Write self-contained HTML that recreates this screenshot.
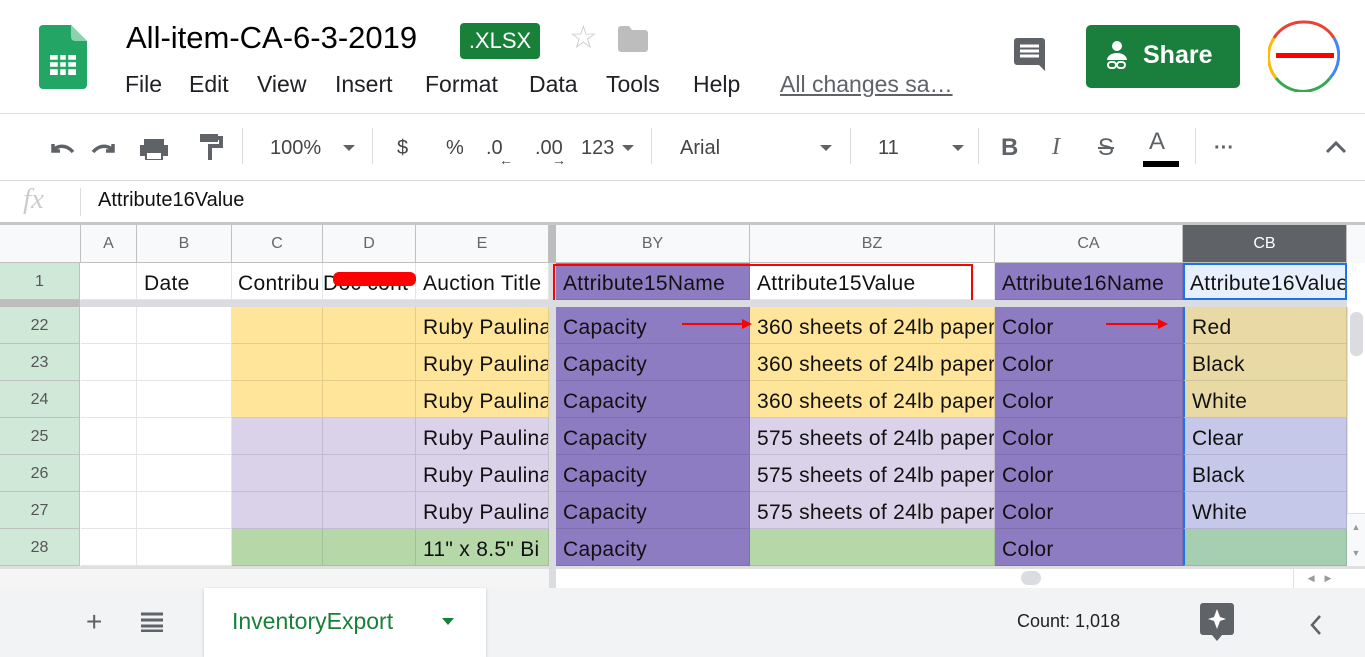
<!DOCTYPE html>
<html><head><meta charset="utf-8"><style>
*{margin:0;padding:0;box-sizing:border-box}
body{width:1365px;height:657px;overflow:hidden;background:#fff;font-family:"Liberation Sans",Arial,sans-serif;position:relative}
.a{position:absolute}
.c{position:absolute;height:37px;border-right:1px solid rgba(0,0,0,.1);border-bottom:1px solid rgba(0,0,0,.1);font-size:21px;letter-spacing:0.3px;line-height:41px;padding-left:7px;white-space:nowrap;overflow:hidden;color:#111}
.h{position:absolute;top:225px;height:38px;background:#f8f9fa;border-right:1px solid #c0c0c0;border-bottom:1px solid #c0c0c0;font-size:16px;color:#666;text-align:center;line-height:38px}
.rh{position:absolute;left:0;width:80px;height:37px;background:#d0e8d8;border-bottom:1px solid #c0c0c0;border-right:1px solid #c0c0c0;text-align:center;font-size:16px;color:#555;line-height:37px}
.m{position:absolute;top:71px;font-size:23px;color:#202124}
.t{position:absolute;top:137px;font-size:20px;color:#444}
.sep{position:absolute;top:128px;width:1px;height:36px;background:#dadce0}
.dd{position:absolute;top:145px;width:0;height:0;border-left:6px solid transparent;border-right:6px solid transparent;border-top:6px solid #5f6368}
</style></head><body>
<svg class="a" style="left:39px;top:25px" width="48" height="64" viewBox="0 0 48 64"><path d="M4 0h28l16 16v44a4 4 0 0 1-4 4H4a4 4 0 0 1-4-4V4a4 4 0 0 1 4-4z" fill="#23a566"/><path d="M32 0l16 16H36a4 4 0 0 1-4-4z" fill="#8ed1b1"/><rect x="11" y="30" width="26" height="20" fill="#fff"/><path d="M11 36h26M11 43h26M20 30v20M28 30v20" stroke="#23a566" stroke-width="2.5"/></svg>
<div class="a" style="left:126px;top:20px;font-size:31px;color:#000">All-item-CA-6-3-2019</div>
<div class="a" style="left:460px;top:23px;width:80px;height:36px;background:#188038;border-radius:4px;color:#fff;font-size:22px;text-align:center;line-height:36px">.XLSX</div>
<div class="a" style="left:569px;top:18px;font-size:32px;color:#ccc">☆</div>
<svg class="a" style="left:618px;top:26px" width="30" height="26"><path d="M0 3a3 3 0 0 1 3-3h8l3 4h13a3 3 0 0 1 3 3v16a3 3 0 0 1-3 3H3a3 3 0 0 1-3-3z" fill="#bdbdbd"/></svg>
<div class="m" style="left:125px">File</div><div class="m" style="left:189px">Edit</div><div class="m" style="left:257px">View</div><div class="m" style="left:335px">Insert</div><div class="m" style="left:425px">Format</div><div class="m" style="left:529px">Data</div><div class="m" style="left:606px">Tools</div><div class="m" style="left:693px">Help</div>
<div class="m" style="left:780px;color:#5f6368;text-decoration:underline">All changes sa…</div>
<svg class="a" style="left:1014px;top:38px" width="36" height="36"><path d="M3 0h25a3 3 0 0 1 3 3v30l-6-6H3a3 3 0 0 1-3-3V3a3 3 0 0 1 3-3z" fill="#5f6368"/><path d="M6 8h19M6 13h19M6 18h19" stroke="#fff" stroke-width="3"/></svg>
<div class="a" style="left:1086px;top:25px;width:154px;height:63px;background:#1a7f3c;border-radius:5px"></div>
<svg class="a" style="left:1104px;top:40px" width="26" height="32"><circle cx="13" cy="6" r="5" fill="#fff"/><path d="M3 20a10 7 0 0 1 20 0z" fill="#fff"/><rect x="4" y="22" width="8" height="6" rx="3" fill="none" stroke="#fff" stroke-width="2"/><rect x="13" y="22" width="8" height="6" rx="3" fill="none" stroke="#fff" stroke-width="2"/></svg>
<div class="a" style="left:1143px;top:41px;font-size:25px;color:#fff;font-weight:bold">Share</div>
<svg class="a" style="left:1268px;top:20px" width="72" height="72"><path d="M36 2a34 34 0 0 1 30 16" stroke="#ea4335" stroke-width="3" fill="none"/><path d="M66 18a34 34 0 0 1-4 40" stroke="#4285f4" stroke-width="3" fill="none"/><path d="M62 58a34 34 0 0 1-54 0" stroke="#34a853" stroke-width="3" fill="none"/><path d="M8 58A34 34 0 0 1 6 18" stroke="#fbbc05" stroke-width="3" fill="none"/><path d="M6 18A34 34 0 0 1 36 2" stroke="#ea4335" stroke-width="3" fill="none"/><rect x="8" y="33" width="58" height="5" fill="#f00"/></svg>
<div class="a" style="left:0;top:113px;width:1365px;height:1px;background:#dadce0"></div>
<svg class="a" style="left:47px;top:136px" width="140" height="26"><path d="M6 8v7h7M6 15c4-6 13-7 20 1" stroke="#5f6368" stroke-width="3.5" fill="none"/><path d="M81 8v7h-7M81 15c-4-6-13-7-20 1" stroke="#5f6368" stroke-width="3.5" fill="none" transform="translate(-15 0)"/><path d="M97 3h20v6H97z M93 9h28v11h-5v4H98v-4h-5z" fill="#5f6368"/><rect x="100" y="17" width="14" height="6" fill="#fff"/></svg>
<svg class="a" style="left:198px;top:132px" width="26" height="30"><path d="M2 2h18v8H2z" fill="#5f6368"/><path d="M20 6h3v8H12v14" stroke="#5f6368" stroke-width="4" fill="none"/></svg>
<div class="sep" style="left:242px"></div>
<div class="t" style="left:270px">100%</div><div class="dd" style="left:343px"></div>
<div class="sep" style="left:372px"></div>
<div class="t" style="left:397px">$</div><div class="t" style="left:446px">%</div><div class="t" style="left:486px">.0</div><div class="a" style="left:499px;top:152px;font-size:14px;color:#444">←</div><div class="t" style="left:535px">.00</div><div class="a" style="left:552px;top:152px;font-size:14px;color:#444">→</div><div class="t" style="left:581px">123</div><div class="dd" style="left:622px"></div>
<div class="sep" style="left:651px"></div>
<div class="t" style="left:680px">Arial</div><div class="dd" style="left:820px"></div>
<div class="sep" style="left:850px"></div>
<div class="t" style="left:878px">11</div><div class="dd" style="left:952px"></div>
<div class="sep" style="left:978px"></div>
<div class="t" style="left:1001px;top:134px;font-weight:bold;font-size:24px;color:#5f6368">B</div>
<div class="t" style="left:1052px;top:134px;font-style:italic;font-size:24px;color:#5f6368;font-family:'Liberation Serif'">I</div>
<div class="t" style="left:1098px;top:134px;font-size:24px;color:#5f6368;text-decoration:line-through">S</div>
<div class="t" style="left:1149px;top:128px;font-size:24px;color:#5f6368">A</div><div class="a" style="left:1143px;top:161px;width:36px;height:6px;background:#000"></div>
<div class="sep" style="left:1195px"></div>
<div class="t" style="left:1214px;font-weight:bold;color:#5f6368">···</div>
<svg class="a" style="left:1325px;top:140px" width="22" height="14"><path d="M2 12l9-9 9 9" stroke="#5f6368" stroke-width="3" fill="none"/></svg>
<div class="a" style="left:0;top:180px;width:1365px;height:1px;background:#dadce0"></div>
<div class="a" style="left:23px;top:183px;font-size:29px;color:#ccc;font-style:italic;font-family:'Liberation Serif'">fx</div>
<div class="a" style="left:80px;top:188px;width:1px;height:28px;background:#dadce0"></div>
<div class="a" style="left:98px;top:189px;font-size:20px;color:#111">Attribute16Value</div>
<div class="a" style="left:0;top:222px;width:1365px;height:3px;background:#c7c7c7"></div>
<div class="h" style="left:0;width:81px"></div>
<div class="h" style="left:81px;width:56px">A</div><div class="h" style="left:137px;width:95px">B</div><div class="h" style="left:232px;width:91px">C</div><div class="h" style="left:323px;width:93px">D</div><div class="h" style="left:416px;width:133px">E</div>
<div class="a" style="left:549px;top:225px;width:7px;height:341px;background:#dadce0"></div>
<div class="a" style="left:549px;top:225px;width:7px;height:38px;background:#bdbdbd"></div>
<div class="h" style="left:556px;width:194px">BY</div><div class="h" style="left:750px;width:245px">BZ</div><div class="h" style="left:995px;width:188px">CA</div><div class="h" style="left:1183px;width:164px;background:#5f6368;color:#fff">CB</div>
<div class="h" style="left:1347px;width:18px;border:none"></div>
<div class="rh" style="top:263px;height:37px">1</div>
<div class="c" style="top:263px;left:81px;width:56px"></div>
<div class="c" style="top:263px;left:137px;width:95px">Date</div>
<div class="c" style="top:263px;left:232px;width:91px;padding-left:6px">Contribu</div>
<div class="c" style="top:263px;left:323px;width:93px;padding-left:0">Doc cont</div>
<div class="a" style="left:333px;top:272px;width:83px;height:14px;background:#f00;border-radius:6px"></div>
<div class="c" style="top:263px;left:416px;width:133px">Auction Title</div>
<div class="c" style="top:263px;left:556px;width:194px;background:#8e7cc3">Attribute15Name</div>
<div class="c" style="top:263px;left:750px;width:245px">Attribute15Value</div>
<div class="c" style="top:263px;left:995px;width:188px;background:#8e7cc3">Attribute16Name</div>
<div class="c" style="top:263px;left:1183px;width:164px;background:#e8f0fe;border:2px solid #1a73e8;line-height:37px;padding-left:5px">Attribute16Value</div>
<div class="a" style="left:553px;top:264px;width:420px;height:38px;border:2px solid #f00"></div>
<div class="a" style="left:0;top:300px;width:1347px;height:7px;background:#dadce0"></div>
<div class="a" style="left:0;top:300px;width:80px;height:7px;background:#bdbdbd"></div>
<div class="rh" style="top:307px">22</div><div class="rh" style="top:344px">23</div><div class="rh" style="top:381px">24</div><div class="rh" style="top:418px">25</div><div class="rh" style="top:455px">26</div><div class="rh" style="top:492px">27</div><div class="rh" style="top:529px">28</div>

<div class="c" style="top:307px;left:81px;width:56px"></div><div class="c" style="top:307px;left:137px;width:95px"></div><div class="c" style="top:307px;left:232px;width:91px;background:#ffe599"></div><div class="c" style="top:307px;left:323px;width:93px;background:#ffe599"></div><div class="c" style="top:307px;left:416px;width:133px;background:#ffe599">Ruby Paulina</div><div class="c" style="top:307px;left:556px;width:194px;background:#8e7cc3">Capacity</div><div class="c" style="top:307px;left:750px;width:245px;background:#ffe599">360 sheets of 24lb paper</div><div class="c" style="top:307px;left:995px;width:188px;background:#8e7cc3">Color</div><div class="c" style="top:307px;left:1183px;width:164px;background:#e8d9a5;border-left:2px solid #1a73e8">Red</div>
<div class="c" style="top:344px;left:81px;width:56px"></div><div class="c" style="top:344px;left:137px;width:95px"></div><div class="c" style="top:344px;left:232px;width:91px;background:#ffe599"></div><div class="c" style="top:344px;left:323px;width:93px;background:#ffe599"></div><div class="c" style="top:344px;left:416px;width:133px;background:#ffe599">Ruby Paulina</div><div class="c" style="top:344px;left:556px;width:194px;background:#8e7cc3">Capacity</div><div class="c" style="top:344px;left:750px;width:245px;background:#ffe599">360 sheets of 24lb paper</div><div class="c" style="top:344px;left:995px;width:188px;background:#8e7cc3">Color</div><div class="c" style="top:344px;left:1183px;width:164px;background:#e8d9a5;border-left:2px solid #1a73e8">Black</div>
<div class="c" style="top:381px;left:81px;width:56px"></div><div class="c" style="top:381px;left:137px;width:95px"></div><div class="c" style="top:381px;left:232px;width:91px;background:#ffe599"></div><div class="c" style="top:381px;left:323px;width:93px;background:#ffe599"></div><div class="c" style="top:381px;left:416px;width:133px;background:#ffe599">Ruby Paulina</div><div class="c" style="top:381px;left:556px;width:194px;background:#8e7cc3">Capacity</div><div class="c" style="top:381px;left:750px;width:245px;background:#ffe599">360 sheets of 24lb paper</div><div class="c" style="top:381px;left:995px;width:188px;background:#8e7cc3">Color</div><div class="c" style="top:381px;left:1183px;width:164px;background:#e8d9a5;border-left:2px solid #1a73e8">White</div>
<div class="c" style="top:418px;left:81px;width:56px"></div><div class="c" style="top:418px;left:137px;width:95px"></div><div class="c" style="top:418px;left:232px;width:91px;background:#d9d2e9"></div><div class="c" style="top:418px;left:323px;width:93px;background:#d9d2e9"></div><div class="c" style="top:418px;left:416px;width:133px;background:#d9d2e9">Ruby Paulina</div><div class="c" style="top:418px;left:556px;width:194px;background:#8e7cc3">Capacity</div><div class="c" style="top:418px;left:750px;width:245px;background:#d9d2e9">575 sheets of 24lb paper</div><div class="c" style="top:418px;left:995px;width:188px;background:#8e7cc3">Color</div><div class="c" style="top:418px;left:1183px;width:164px;background:#c5c8e8;border-left:2px solid #1a73e8">Clear</div>
<div class="c" style="top:455px;left:81px;width:56px"></div><div class="c" style="top:455px;left:137px;width:95px"></div><div class="c" style="top:455px;left:232px;width:91px;background:#d9d2e9"></div><div class="c" style="top:455px;left:323px;width:93px;background:#d9d2e9"></div><div class="c" style="top:455px;left:416px;width:133px;background:#d9d2e9">Ruby Paulina</div><div class="c" style="top:455px;left:556px;width:194px;background:#8e7cc3">Capacity</div><div class="c" style="top:455px;left:750px;width:245px;background:#d9d2e9">575 sheets of 24lb paper</div><div class="c" style="top:455px;left:995px;width:188px;background:#8e7cc3">Color</div><div class="c" style="top:455px;left:1183px;width:164px;background:#c5c8e8;border-left:2px solid #1a73e8">Black</div>
<div class="c" style="top:492px;left:81px;width:56px"></div><div class="c" style="top:492px;left:137px;width:95px"></div><div class="c" style="top:492px;left:232px;width:91px;background:#d9d2e9"></div><div class="c" style="top:492px;left:323px;width:93px;background:#d9d2e9"></div><div class="c" style="top:492px;left:416px;width:133px;background:#d9d2e9">Ruby Paulina</div><div class="c" style="top:492px;left:556px;width:194px;background:#8e7cc3">Capacity</div><div class="c" style="top:492px;left:750px;width:245px;background:#d9d2e9">575 sheets of 24lb paper</div><div class="c" style="top:492px;left:995px;width:188px;background:#8e7cc3">Color</div><div class="c" style="top:492px;left:1183px;width:164px;background:#c5c8e8;border-left:2px solid #1a73e8">White</div>
<div class="c" style="top:529px;left:81px;width:56px"></div><div class="c" style="top:529px;left:137px;width:95px"></div><div class="c" style="top:529px;left:232px;width:91px;background:#b6d7a8"></div><div class="c" style="top:529px;left:323px;width:93px;background:#b6d7a8"></div><div class="c" style="top:529px;left:416px;width:133px;background:#b6d7a8">11" x 8.5" Bi</div><div class="c" style="top:529px;left:556px;width:194px;background:#8e7cc3">Capacity</div><div class="c" style="top:529px;left:750px;width:245px;background:#b6d7a8"></div><div class="c" style="top:529px;left:995px;width:188px;background:#8e7cc3">Color</div><div class="c" style="top:529px;left:1183px;width:164px;background:#a6ceb0;border-left:2px solid #1a73e8"></div>
<svg class="a" style="left:680px;top:316px" width="520" height="20"><path d="M2 8h62M426 8h54" stroke="#f00" stroke-width="2"/><path d="M62 3l10 5-10 5zM478 3l10 5-10 5z" fill="#f00"/></svg>
<div class="a" style="left:1347px;top:307px;width:18px;height:259px;background:#fff;border-left:1px solid #e0e0e0"></div>
<div class="a" style="left:1350px;top:312px;width:13px;height:44px;background:#dadce0;border-radius:6px"></div>
<div class="a" style="left:1347px;top:513px;width:18px;height:53px;background:#f8f9fa;border-top:1px solid #e0e0e0;font-size:9px;color:#999;text-align:center;line-height:26px">▲<br>▼</div>
<div class="a" style="left:0;top:566px;width:1365px;height:3px;background:#e0e0e0"></div>
<div class="a" style="left:0;top:569px;width:549px;height:19px;background:#f5f5f5"></div>
<div class="a" style="left:549px;top:566px;width:7px;height:22px;background:#dadce0"></div>
<div class="a" style="left:1021px;top:571px;width:20px;height:14px;background:#dadce0;border-radius:7px"></div>
<div class="a" style="left:1293px;top:569px;width:52px;height:19px;border-left:1px solid #e0e0e0;font-size:9px;color:#999;line-height:19px;text-align:center">◀ &nbsp;&nbsp; ▶</div>
<div class="a" style="left:0;top:588px;width:1365px;height:69px;background:#f1f3f4"></div>
<div class="a" style="left:86px;top:606px;font-size:28px;color:#5f6368">+</div>
<svg class="a" style="left:141px;top:612px" width="22" height="20"><path d="M0 2h22M0 8h22M0 14h22M0 19h22" stroke="#5f6368" stroke-width="3"/></svg>
<div class="a" style="left:204px;top:588px;width:282px;height:69px;background:#fff;box-shadow:0 1px 3px rgba(0,0,0,.2)"></div>
<div class="a" style="left:232px;top:608px;font-size:23px;color:#188038">InventoryExport</div>
<div class="a" style="left:442px;top:618px;border-left:6px solid transparent;border-right:6px solid transparent;border-top:7px solid #188038"></div>
<div class="a" style="left:1017px;top:611px;font-size:18px;color:#222">Count: 1,018</div>
<svg class="a" style="left:1200px;top:603px" width="34" height="38"><path d="M3 0h28a3 3 0 0 1 3 3v26a3 3 0 0 1-3 3H22l-5 6-5-6H3a3 3 0 0 1-3-3V3a3 3 0 0 1 3-3z" fill="#5f6368"/><path d="M17 6l3 8 6 2-6 2-3 8-3-8-6-2 6-2z" fill="#fff"/></svg>
<svg class="a" style="left:1309px;top:614px" width="14" height="22"><path d="M11 2L3 11l8 9" stroke="#5f6368" stroke-width="2.5" fill="none"/></svg>
</body></html>
